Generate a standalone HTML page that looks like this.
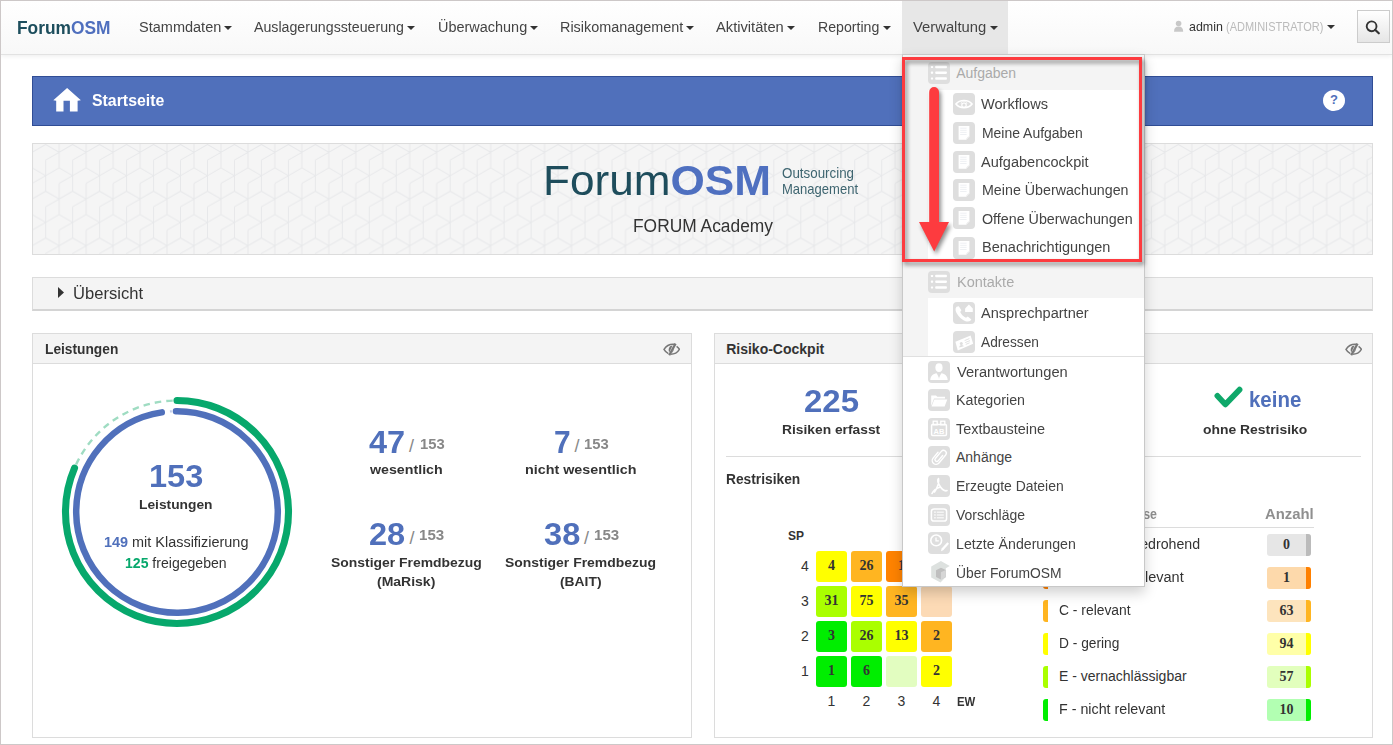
<!DOCTYPE html>
<html><head><meta charset="utf-8"><title>ForumOSM</title>
<style>
html,body{margin:0;padding:0;}
body{width:1393px;height:745px;position:relative;overflow:hidden;background:#fff;font-family:"Liberation Sans",sans-serif;color:#333;}
.t{position:absolute;white-space:nowrap;transform-origin:0 0;z-index:3}
.abs{position:absolute;z-index:3}
.caret{position:absolute;z-index:3;width:0;height:0;border-left:4px solid transparent;border-right:4px solid transparent;border-top:4px solid #555;}
#frame{position:absolute;left:0;top:0;width:1391px;height:743px;border:1px solid #cdc8c8;z-index:50;pointer-events:none;}
#navbar{position:absolute;left:1px;top:1px;width:1391px;height:53px;background:linear-gradient(#fff,#f8f8f8);border-bottom:1px solid #e2e2e2;box-shadow:0 1px 5px rgba(0,0,0,.08);z-index:1}
.panel{position:absolute;border:1px solid #dcdcdc;background:#fff;}
.phead{position:absolute;left:0;top:0;right:0;height:29px;background:#f4f4f4;border-bottom:1px solid #dcdcdc;}
.cell{position:absolute;width:31px;height:31px;border-radius:3px;}
.badge{position:absolute;left:1267px;width:44px;height:22px;border-radius:3px;overflow:hidden;}
.badge i{position:absolute;right:0;top:0;bottom:0;width:5px;}
.stripe{position:absolute;left:1043px;width:5px;height:22px;border-radius:3px 0 0 3px;}
.ico{position:absolute;width:22px;height:22px;border-radius:4px;background:#dedede;}
.ico svg{position:absolute;left:0;top:0;}
</style></head><body>
<div id="navbar"></div>
<div class="abs" style="left:902px;top:1px;width:106px;height:53px;background:#e7e7e7;z-index:2"></div>
<!-- user icon -->
<svg class="abs" style="left:1173px;top:20px" width="12" height="13" viewBox="0 0 12 13"><circle cx="5.6" cy="3.5" r="2.8" fill="#c8c8c8"/><path d="M1 11.8 C1 8.2 2.8 6.6 5.6 6.6 C8.4 6.6 10.2 8.2 10.2 11.8 Z" fill="#c8c8c8"/></svg>
<!-- search button -->
<div class="abs" style="left:1357px;top:10px;width:31px;height:31px;border:1px solid #ccc;border-radius:0;background:linear-gradient(#fff,#e6e6e6);"></div>
<svg class="abs" style="left:1365px;top:20px" width="16" height="15" viewBox="0 0 16 15"><circle cx="6.6" cy="6.3" r="4.9" fill="none" stroke="#333" stroke-width="1.9"/><path d="M10.1 9.8 L13.8 13.3" stroke="#333" stroke-width="2.2" stroke-linecap="round"/></svg>

<!-- blue bar -->
<div class="abs" style="left:32px;top:76px;width:1339px;height:48px;background:#5070bb;border:1px solid #304d95;"></div>
<svg class="abs" style="left:52px;top:87px" width="30" height="26" viewBox="0 0 30 26"><path d="M15.1 0.9 L28.9 13.2 L25.6 13.7 L25.6 24.5 L17.9 24.5 L17.9 13.7 L11.5 13.7 L11.5 24.5 L4.2 24.5 L4.2 13.7 L1.3 13.2 Z" fill="#fff"/></svg>
<div class="abs" style="left:1323px;top:89.5px;width:22px;height:21px;border-radius:50%;background:#fff;"></div>
<div class="t" style="left:1328px;top:92px;width:12px;text-align:center;font-size:13px;line-height:16px;font-weight:bold;color:#5070bb;">?</div>

<!-- banner -->
<div class="abs" style="left:32px;top:143px;width:1339px;height:110px;border:1px solid #dcdcdc;background:#f5f5f5;overflow:hidden;">
<svg width="1339" height="110" style="position:absolute;left:0;top:0">
<defs><pattern id="cubes" patternUnits="userSpaceOnUse" width="26.968" height="46.740" x="26.170" y="23.850"><path d="M-40.45 -70.11L-26.97 -62.32M-26.97 -62.32L-13.48 -70.11M-26.97 -77.90L-26.97 -46.74M-40.45 -54.53L-26.97 -62.32M-40.45 -54.53L-40.45 -23.37M-26.97 -46.74L-40.45 -38.95M-26.97 -46.74L-13.48 -38.95M-40.45 -38.95L-53.94 -31.16M-40.45 -23.37L-26.97 -15.58M-26.97 -15.58L-13.48 -23.37M-26.97 -31.16L-26.97 0.00M-40.45 -7.79L-26.97 -15.58M-40.45 -7.79L-40.45 23.37M-26.97 0.00L-40.45 7.79M-26.97 0.00L-13.48 7.79M-40.45 7.79L-53.94 15.58M-40.45 23.37L-26.97 31.16M-26.97 31.16L-13.48 23.37M-26.97 15.58L-26.97 46.74M-40.45 38.95L-26.97 31.16M-40.45 38.95L-40.45 70.11M-26.97 46.74L-40.45 54.53M-26.97 46.74L-13.48 54.53M-40.45 54.53L-53.94 62.32M-13.48 -70.11L0.00 -62.32M0.00 -62.32L13.48 -70.11M0.00 -77.90L0.00 -46.74M-13.48 -54.53L0.00 -62.32M-13.48 -54.53L-13.48 -23.37M0.00 -46.74L-13.48 -38.95M0.00 -46.74L13.48 -38.95M-13.48 -38.95L-26.97 -31.16M-13.48 -23.37L0.00 -15.58M0.00 -15.58L13.48 -23.37M0.00 -31.16L0.00 0.00M-13.48 -7.79L0.00 -15.58M-13.48 -7.79L-13.48 23.37M0.00 0.00L-13.48 7.79M0.00 0.00L13.48 7.79M-13.48 7.79L-26.97 15.58M-13.48 23.37L0.00 31.16M0.00 31.16L13.48 23.37M0.00 15.58L0.00 46.74M-13.48 38.95L0.00 31.16M-13.48 38.95L-13.48 70.11M0.00 46.74L-13.48 54.53M0.00 46.74L13.48 54.53M-13.48 54.53L-26.97 62.32M13.48 -70.11L26.97 -62.32M26.97 -62.32L40.45 -70.11M26.97 -77.90L26.97 -46.74M13.48 -54.53L26.97 -62.32M13.48 -54.53L13.48 -23.37M26.97 -46.74L13.48 -38.95M26.97 -46.74L40.45 -38.95M13.48 -38.95L0.00 -31.16M13.48 -23.37L26.97 -15.58M26.97 -15.58L40.45 -23.37M26.97 -31.16L26.97 0.00M13.48 -7.79L26.97 -15.58M13.48 -7.79L13.48 23.37M26.97 0.00L13.48 7.79M26.97 0.00L40.45 7.79M13.48 7.79L0.00 15.58M13.48 23.37L26.97 31.16M26.97 31.16L40.45 23.37M26.97 15.58L26.97 46.74M13.48 38.95L26.97 31.16M13.48 38.95L13.48 70.11M26.97 46.74L13.48 54.53M26.97 46.74L40.45 54.53M13.48 54.53L0.00 62.32M40.45 -70.11L53.94 -62.32M53.94 -62.32L67.42 -70.11M53.94 -77.90L53.94 -46.74M40.45 -54.53L53.94 -62.32M40.45 -54.53L40.45 -23.37M53.94 -46.74L40.45 -38.95M53.94 -46.74L67.42 -38.95M40.45 -38.95L26.97 -31.16M40.45 -23.37L53.94 -15.58M53.94 -15.58L67.42 -23.37M53.94 -31.16L53.94 0.00M40.45 -7.79L53.94 -15.58M40.45 -7.79L40.45 23.37M53.94 0.00L40.45 7.79M53.94 0.00L67.42 7.79M40.45 7.79L26.97 15.58M40.45 23.37L53.94 31.16M53.94 31.16L67.42 23.37M53.94 15.58L53.94 46.74M40.45 38.95L53.94 31.16M40.45 38.95L40.45 70.11M53.94 46.74L40.45 54.53M53.94 46.74L67.42 54.53M40.45 54.53L26.97 62.32" fill="none" stroke="#e7e8ea" stroke-width="1"/></pattern></defs>
<rect width="1339" height="110" fill="url(#cubes)"/>
</svg>
</div>

<!-- uebersicht -->
<div class="abs" style="left:32px;top:277px;width:1339px;height:31px;border:1px solid #dcdcdc;border-bottom:2px solid #d4d4d4;background:#f4f4f4;"></div>
<svg class="abs" style="left:57px;top:286px" width="8" height="13" viewBox="0 0 8 13"><path d="M1 1 L7 6.5 L1 12 Z" fill="#333"/></svg>

<!-- panels -->
<div class="panel" style="left:32px;top:333px;width:658px;height:403px;"><div class="phead"></div></div>
<div class="panel" style="left:714px;top:333px;width:657px;height:403px;"><div class="phead"></div></div>
<svg class="abs" style="left:663px;top:343px" width="17" height="13" viewBox="0 0 17 13"><path d="M11.8 1.3 C7.5 0.8 3.2 2.8 1 6.3 C2 8.2 3.6 9.7 5.4 10.6" fill="none" stroke="#777" stroke-width="1.5"/><path d="M13.6 3.3 C14.8 4.1 15.8 5.2 16.4 6.3 C14.6 9.4 11.2 11.2 7.6 11.2" fill="none" stroke="#777" stroke-width="1.5"/><path d="M12.6 0.6 L6.2 12.2" stroke="#777" stroke-width="2.2"/><path d="M7 3.2 L9.6 2.4 L6.3 9.5 C5.2 7.5 5.5 4.8 7 3.2 Z" fill="#777"/><path d="M10.6 6.2 L9.2 9.4" stroke="#888" stroke-width="1"/></svg>
<svg class="abs" style="left:1345px;top:343px" width="17" height="13" viewBox="0 0 17 13"><path d="M11.8 1.3 C7.5 0.8 3.2 2.8 1 6.3 C2 8.2 3.6 9.7 5.4 10.6" fill="none" stroke="#777" stroke-width="1.5"/><path d="M13.6 3.3 C14.8 4.1 15.8 5.2 16.4 6.3 C14.6 9.4 11.2 11.2 7.6 11.2" fill="none" stroke="#777" stroke-width="1.5"/><path d="M12.6 0.6 L6.2 12.2" stroke="#777" stroke-width="2.2"/><path d="M7 3.2 L9.6 2.4 L6.3 9.5 C5.2 7.5 5.5 4.8 7 3.2 Z" fill="#777"/><path d="M10.6 6.2 L9.2 9.4" stroke="#888" stroke-width="1"/></svg>
<!-- donut -->
<svg class="abs" style="left:57px;top:392.4px" width="240" height="240" viewBox="0 0 240 240">
<g transform="translate(120,120)">
<circle r="111.5" fill="none" stroke="#9fdcc2" stroke-width="2.4" stroke-dasharray="6.5 5" stroke-dashoffset="3.5"/>
<circle r="100.8" fill="none" stroke="#c2cdea" stroke-width="2.2" stroke-dasharray="2 9" stroke-dashoffset="-16"/>
<circle r="111.5" fill="none" stroke="#07a86c" stroke-width="7.1" stroke-linecap="round" transform="rotate(-90)" stroke-dasharray="570 1000"/>
<circle r="100.8" fill="none" stroke="#5070bb" stroke-width="6.5" stroke-linecap="round" transform="rotate(-90.6)" stroke-dasharray="618 1000"/>
</g></svg>

<!-- heatmap cells -->
<div class="cell" style="left:816px;top:551px;background:#ffff00"></div>
<div class="cell" style="left:851px;top:551px;background:#ffb521"></div>
<div class="cell" style="left:886px;top:551px;background:#ff8300"></div>
<div class="cell" style="left:921px;top:551px;background:#ff3030"></div>
<div class="cell" style="left:816px;top:586px;background:#aaff00"></div>
<div class="cell" style="left:851px;top:586px;background:#ffff00"></div>
<div class="cell" style="left:886px;top:586px;background:#ffb521"></div>
<div class="cell" style="left:921px;top:586px;background:#fcdab5"></div>
<div class="cell" style="left:816px;top:621px;background:#00ee00"></div>
<div class="cell" style="left:851px;top:621px;background:#aaff00"></div>
<div class="cell" style="left:886px;top:621px;background:#ffff00"></div>
<div class="cell" style="left:921px;top:621px;background:#ffb521"></div>
<div class="cell" style="left:816px;top:656px;background:#00ee00"></div>
<div class="cell" style="left:851px;top:656px;background:#00ee00"></div>
<div class="cell" style="left:886px;top:656px;background:#e2fdc0"></div>
<div class="cell" style="left:921px;top:656px;background:#ffff00"></div>

<!-- hr lines -->
<div class="abs" style="left:726px;top:456px;width:635px;height:1px;background:#dcdcdc"></div>
<!-- check -->
<svg class="abs" style="left:1214px;top:386px" width="29" height="23" viewBox="0 0 29 23"><path d="M3.4 9.9 L11.3 18.4 L25.5 3.7" fill="none" stroke="#0fa86a" stroke-width="5.8" stroke-linecap="round" stroke-linejoin="round"/></svg>

<!-- table -->
<div class="abs" style="left:1043px;top:527px;width:271px;height:1px;background:#dcdcdc"></div>
<div class="stripe" style="top:534px;background:#bbbbbb"></div><div class="badge" style="top:534px;background:#e6e6e6"><i style="background:#bbbbbb"></i></div>
<div class="stripe" style="top:567px;background:#ff8000"></div><div class="badge" style="top:567px;background:#fdd9ab"><i style="background:#ff8000"></i></div>
<div class="stripe" style="top:600px;background:#ffb521"></div><div class="badge" style="top:600px;background:#fde4bd"><i style="background:#ffb521"></i></div>
<div class="stripe" style="top:633px;background:#ffff00"></div><div class="badge" style="top:633px;background:#ffffa8"><i style="background:#ffff00"></i></div>
<div class="stripe" style="top:666px;background:#aaff00"></div><div class="badge" style="top:666px;background:#e2ffbd"><i style="background:#aaff00"></i></div>
<div class="stripe" style="top:699px;background:#00ee00"></div><div class="badge" style="top:699px;background:#b2ffb2"><i style="background:#00ee00"></i></div>

<div class="t" id="t0" style="left:16.5px;top:19px;font-size:18px;line-height:18px;font-weight:bold;color:#1d4e5d;transform:scaleX(0.9638);">Forum<span style="color:#4f6fbe">OSM</span></div>
<div class="t" id="t1" style="left:138.7px;top:20px;font-size:14px;line-height:14px;font-weight:normal;color:#444;transform:scaleX(1.0369);">Stammdaten</div>
<div class="t" id="t2" style="left:253.7px;top:20px;font-size:14px;line-height:14px;font-weight:normal;color:#444;transform:scaleX(1.0129);">Auslagerungssteuerung</div>
<div class="t" id="t3" style="left:437.8px;top:20px;font-size:14px;line-height:14px;font-weight:normal;color:#444;transform:scaleX(1.0325);">Überwachung</div>
<div class="t" id="t4" style="left:559.9px;top:20px;font-size:14px;line-height:14px;font-weight:normal;color:#444;transform:scaleX(1.0288);">Risikomanagement</div>
<div class="t" id="t5" style="left:716.1px;top:20px;font-size:14px;line-height:14px;font-weight:normal;color:#444;transform:scaleX(1.0496);">Aktivitäten</div>
<div class="t" id="t6" style="left:818.2px;top:20px;font-size:14px;line-height:14px;font-weight:normal;color:#444;transform:scaleX(1.0098);">Reporting</div>
<div class="t" id="t7" style="left:913.3px;top:20px;font-size:14px;line-height:14px;font-weight:normal;color:#444;transform:scaleX(1.0566);">Verwaltung</div>
<div class="t" id="t8" style="left:1188.7px;top:20px;font-size:13px;line-height:13px;font-weight:normal;color:#333;transform:scaleX(0.9570);">admin</div>
<div class="t" id="t9" style="left:1226.4px;top:20px;font-size:13px;line-height:13px;font-weight:normal;color:#bbb;transform:scaleX(0.8464);">(ADMINISTRATOR)</div>
<div class="t" id="t10" style="left:91.9px;top:92px;font-size:17px;line-height:17px;font-weight:bold;color:#fff;transform:scaleX(0.9331);">Startseite</div>
<div class="t" id="t11" style="left:543.0px;top:160px;font-size:42px;line-height:42px;font-weight:normal;color:#1e4d5c;transform:scaleX(1.0505);"><span style="font-weight:normal">Forum</span><span style="color:#4f70c0;font-weight:bold">OSM</span></div>
<div class="t" id="t12" style="left:782.0px;top:165px;font-size:15px;line-height:15px;font-weight:normal;color:#3e6570;transform:scaleX(0.8903);">Outsourcing</div>
<div class="t" id="t13" style="left:782.0px;top:181px;font-size:15px;line-height:15px;font-weight:normal;color:#3e6570;transform:scaleX(0.8680);">Management</div>
<div class="t" id="t14" style="left:632.7px;top:217px;font-size:18px;line-height:18px;font-weight:normal;color:#333;transform:scaleX(0.9653);">FORUM Academy</div>
<div class="t" id="t15" style="left:73.2px;top:285px;font-size:17px;line-height:17px;font-weight:normal;color:#333;transform:scaleX(0.9748);">Übersicht</div>
<div class="t" id="t16" style="left:45.0px;top:342px;font-size:14px;line-height:14px;font-weight:bold;color:#333;transform:scaleX(0.9816);">Leistungen</div>
<div class="t" id="t17" style="left:726.2px;top:342px;font-size:14px;line-height:14px;font-weight:bold;color:#333;">Risiko-Cockpit</div>
<div class="t" id="t18" style="left:149.0px;top:460px;font-size:32px;line-height:32px;font-weight:bold;color:#5070bb;transform:scaleX(1.0170);">153</div>
<div class="t" id="t19" style="left:139.0px;top:498px;font-size:13px;line-height:13px;font-weight:bold;color:#333;transform:scaleX(1.0599);">Leistungen</div>
<div class="t" id="t20" style="left:104.2px;top:535px;font-size:14px;line-height:14px;font-weight:normal;color:#333;transform:scaleX(1.0310);"><span style="color:#5070bb;font-weight:bold">149</span> mit Klassifizierung</div>
<div class="t" id="t21" style="left:125.2px;top:556px;font-size:14px;line-height:14px;font-weight:normal;color:#333;transform:scaleX(1.0039);"><span style="color:#07a86c;font-weight:bold">125</span> freigegeben</div>
<div class="t" id="t22" style="left:368.9px;top:426px;font-size:32px;line-height:32px;font-weight:bold;color:#5070bb;transform:scaleX(1.0142);">47</div>
<div class="t" id="t23" style="left:409.0px;top:437px;font-size:18px;line-height:18px;font-weight:normal;color:#888;">/</div>
<div class="t" id="t24" style="left:419.5px;top:436px;font-size:15px;line-height:15px;font-weight:bold;color:#888;transform:scaleX(0.9868);">153</div>
<div class="t" id="t25" style="left:369.7px;top:463px;font-size:13px;line-height:13px;font-weight:bold;color:#333;transform:scaleX(1.0937);">wesentlich</div>
<div class="t" id="t26" style="left:553.7px;top:426px;font-size:32px;line-height:32px;font-weight:bold;color:#5070bb;transform:scaleX(0.9327);">7</div>
<div class="t" id="t27" style="left:574.6px;top:437px;font-size:18px;line-height:18px;font-weight:normal;color:#888;">/</div>
<div class="t" id="t28" style="left:584.4px;top:436px;font-size:15px;line-height:15px;font-weight:bold;color:#888;transform:scaleX(0.9868);">153</div>
<div class="t" id="t29" style="left:525.3px;top:463px;font-size:13px;line-height:13px;font-weight:bold;color:#333;transform:scaleX(1.1024);">nicht wesentlich</div>
<div class="t" id="t30" style="left:369.3px;top:518px;font-size:32px;line-height:32px;font-weight:bold;color:#5070bb;transform:scaleX(1.0170);">28</div>
<div class="t" id="t31" style="left:409.5px;top:529px;font-size:18px;line-height:18px;font-weight:normal;color:#888;">/</div>
<div class="t" id="t32" style="left:419.1px;top:527px;font-size:15px;line-height:15px;font-weight:bold;color:#888;transform:scaleX(1.0067);">153</div>
<div class="t" id="t33" style="left:331.2px;top:556px;font-size:13px;line-height:13px;font-weight:bold;color:#333;transform:scaleX(1.0699);">Sonstiger Fremdbezug</div>
<div class="t" id="t34" style="left:377.1px;top:575px;font-size:13px;line-height:13px;font-weight:bold;color:#333;transform:scaleX(1.0759);">(MaRisk)</div>
<div class="t" id="t35" style="left:543.7px;top:518px;font-size:32px;line-height:32px;font-weight:bold;color:#5070bb;transform:scaleX(1.0198);">38</div>
<div class="t" id="t36" style="left:583.9px;top:529px;font-size:18px;line-height:18px;font-weight:normal;color:#888;">/</div>
<div class="t" id="t37" style="left:593.5px;top:527px;font-size:15px;line-height:15px;font-weight:bold;color:#888;transform:scaleX(1.0067);">153</div>
<div class="t" id="t38" style="left:505.2px;top:556px;font-size:13px;line-height:13px;font-weight:bold;color:#333;transform:scaleX(1.0720);">Sonstiger Fremdbezug</div>
<div class="t" id="t39" style="left:560.3px;top:575px;font-size:13px;line-height:13px;font-weight:bold;color:#333;transform:scaleX(1.0641);">(BAIT)</div>
<div class="t" id="t40" style="left:804.0px;top:385px;font-size:32px;line-height:32px;font-weight:bold;color:#5070bb;transform:scaleX(1.0301);">225</div>
<div class="t" id="t41" style="left:782.2px;top:423px;font-size:13px;line-height:13px;font-weight:bold;color:#333;transform:scaleX(1.0616);">Risiken erfasst</div>
<div class="t" id="t42" style="left:726.3px;top:472px;font-size:14px;line-height:14px;font-weight:bold;color:#333;transform:scaleX(0.9830);">Restrisiken</div>
<div class="t" id="t43" style="left:1248.5px;top:389px;font-size:22px;line-height:22px;font-weight:bold;color:#5070bb;transform:scaleX(0.9295);">keine</div>
<div class="t" id="t44" style="left:1202.8px;top:423px;font-size:13px;line-height:13px;font-weight:bold;color:#333;transform:scaleX(1.0694);">ohne Restrisiko</div>
<div class="t" id="t45" style="left:788.0px;top:530px;font-size:12px;line-height:12px;font-weight:bold;color:#333;">SP</div>
<div class="t" id="t46" style="left:801.0px;top:559px;font-size:14px;line-height:14px;font-weight:normal;color:#333;">4</div>
<div class="t" id="t47" style="left:801.0px;top:594px;font-size:14px;line-height:14px;font-weight:normal;color:#333;">3</div>
<div class="t" id="t48" style="left:801.0px;top:629px;font-size:14px;line-height:14px;font-weight:normal;color:#333;">2</div>
<div class="t" id="t49" style="left:801.0px;top:664px;font-size:14px;line-height:14px;font-weight:normal;color:#333;">1</div>
<div class="t" id="t50" style="left:831.5px;top:694px;font-size:14px;line-height:14px;font-weight:normal;color:#333;transform:translateX(-50%);">1</div>
<div class="t" id="t51" style="left:866.5px;top:694px;font-size:14px;line-height:14px;font-weight:normal;color:#333;transform:translateX(-50%);">2</div>
<div class="t" id="t52" style="left:901.5px;top:694px;font-size:14px;line-height:14px;font-weight:normal;color:#333;transform:translateX(-50%);">3</div>
<div class="t" id="t53" style="left:936.5px;top:694px;font-size:14px;line-height:14px;font-weight:normal;color:#333;transform:translateX(-50%);">4</div>
<div class="t" id="t54" style="left:957.0px;top:696px;font-size:12px;line-height:12px;font-weight:bold;color:#333;transform:scaleX(0.9460);">EW</div>
<div class="t" id="t55" style="left:831.5px;top:559px;font-size:14px;line-height:14px;font-weight:bold;color:#333;font-family:'Liberation Serif', serif;transform:translateX(-50%);">4</div>
<div class="t" id="t56" style="left:866.5px;top:559px;font-size:14px;line-height:14px;font-weight:bold;color:#333;font-family:'Liberation Serif', serif;transform:translateX(-50%);">26</div>
<div class="t" id="t57" style="left:901.5px;top:559px;font-size:14px;line-height:14px;font-weight:bold;color:#333;font-family:'Liberation Serif', serif;transform:translateX(-50%);">1</div>
<div class="t" id="t58" style="left:831.5px;top:594px;font-size:14px;line-height:14px;font-weight:bold;color:#333;font-family:'Liberation Serif', serif;transform:translateX(-50%);">31</div>
<div class="t" id="t59" style="left:866.5px;top:594px;font-size:14px;line-height:14px;font-weight:bold;color:#333;font-family:'Liberation Serif', serif;transform:translateX(-50%);">75</div>
<div class="t" id="t60" style="left:901.5px;top:594px;font-size:14px;line-height:14px;font-weight:bold;color:#333;font-family:'Liberation Serif', serif;transform:translateX(-50%);">35</div>
<div class="t" id="t61" style="left:831.5px;top:629px;font-size:14px;line-height:14px;font-weight:bold;color:#333;font-family:'Liberation Serif', serif;transform:translateX(-50%);">3</div>
<div class="t" id="t62" style="left:866.5px;top:629px;font-size:14px;line-height:14px;font-weight:bold;color:#333;font-family:'Liberation Serif', serif;transform:translateX(-50%);">26</div>
<div class="t" id="t63" style="left:901.5px;top:629px;font-size:14px;line-height:14px;font-weight:bold;color:#333;font-family:'Liberation Serif', serif;transform:translateX(-50%);">13</div>
<div class="t" id="t64" style="left:936.5px;top:629px;font-size:14px;line-height:14px;font-weight:bold;color:#333;font-family:'Liberation Serif', serif;transform:translateX(-50%);">2</div>
<div class="t" id="t65" style="left:831.5px;top:664px;font-size:14px;line-height:14px;font-weight:bold;color:#333;font-family:'Liberation Serif', serif;transform:translateX(-50%);">1</div>
<div class="t" id="t66" style="left:866.5px;top:664px;font-size:14px;line-height:14px;font-weight:bold;color:#333;font-family:'Liberation Serif', serif;transform:translateX(-50%);">6</div>
<div class="t" id="t67" style="left:936.5px;top:664px;font-size:14px;line-height:14px;font-weight:bold;color:#333;font-family:'Liberation Serif', serif;transform:translateX(-50%);">2</div>
<div class="t" id="t68" style="left:1059.0px;top:507px;font-size:14px;line-height:14px;font-weight:bold;color:#8f8f8f;transform:scaleX(0.8866);">Restrisikoklasse</div>
<div class="t" id="t69" style="left:1265.2px;top:507px;font-size:14px;line-height:14px;font-weight:bold;color:#8f8f8f;transform:scaleX(1.0612);">Anzahl</div>
<div class="t" id="t70" style="left:1059.0px;top:537px;font-size:14px;line-height:14px;font-weight:normal;color:#333;transform:scaleX(1.0127);">A - existenzbedrohend</div>
<div class="t" id="t71" style="left:1286.5px;top:538px;font-size:14px;line-height:14px;font-weight:bold;color:#333;font-family:'Liberation Serif', serif;transform:translateX(-50%);">0</div>
<div class="t" id="t72" style="left:1144.7px;top:570px;font-size:14px;line-height:14px;font-weight:normal;color:#333;transform:scaleX(1.0359);">levant</div>
<div class="t" id="t73" style="left:1286.5px;top:571px;font-size:14px;line-height:14px;font-weight:bold;color:#333;font-family:'Liberation Serif', serif;transform:translateX(-50%);">1</div>
<div class="t" id="t74" style="left:1059.0px;top:603px;font-size:14px;line-height:14px;font-weight:normal;color:#333;transform:scaleX(0.9895);">C - relevant</div>
<div class="t" id="t75" style="left:1286.5px;top:604px;font-size:14px;line-height:14px;font-weight:bold;color:#333;font-family:'Liberation Serif', serif;transform:translateX(-50%);">63</div>
<div class="t" id="t76" style="left:1059.0px;top:636px;font-size:14px;line-height:14px;font-weight:normal;color:#333;transform:scaleX(0.9823);">D - gering</div>
<div class="t" id="t77" style="left:1286.5px;top:637px;font-size:14px;line-height:14px;font-weight:bold;color:#333;font-family:'Liberation Serif', serif;transform:translateX(-50%);">94</div>
<div class="t" id="t78" style="left:1059.0px;top:669px;font-size:14px;line-height:14px;font-weight:normal;color:#333;">E - vernachlässigbar</div>
<div class="t" id="t79" style="left:1286.5px;top:670px;font-size:14px;line-height:14px;font-weight:bold;color:#333;font-family:'Liberation Serif', serif;transform:translateX(-50%);">57</div>
<div class="t" id="t80" style="left:1059.0px;top:702px;font-size:14px;line-height:14px;font-weight:normal;color:#333;transform:scaleX(1.0191);">F - nicht relevant</div>
<div class="t" id="t81" style="left:1286.5px;top:703px;font-size:14px;line-height:14px;font-weight:bold;color:#333;font-family:'Liberation Serif', serif;transform:translateX(-50%);">10</div>
<div class="caret" style="left:224.1px;top:26px;border-top-color:#333"></div>
<div class="caret" style="left:406.6px;top:26px;border-top-color:#333"></div>
<div class="caret" style="left:530.1px;top:26px;border-top-color:#333"></div>
<div class="caret" style="left:686.3px;top:26px;border-top-color:#333"></div>
<div class="caret" style="left:787.0px;top:26px;border-top-color:#333"></div>
<div class="caret" style="left:882.6px;top:26px;border-top-color:#333"></div>
<div class="caret" style="left:989.6px;top:26px;border-top-color:#333"></div>
<div class="caret" style="left:1327.0px;top:25px;border-top-color:#333"></div>

<!-- dropdown -->
<div class="abs" style="left:902px;top:54px;width:241px;height:531px;background:#fff;border:1px solid #c8c8c8;box-shadow:0 6px 12px rgba(0,0,0,.18);z-index:10;overflow:hidden;">
  <div class="abs" style="left:0;top:0;width:241px;height:35px;background:#f4f4f4"></div>
  <div class="abs" style="left:0;top:35px;width:25px;height:172px;background:#f4f4f4"></div>
  <div class="abs" style="left:0;top:207px;width:241px;height:36px;background:#f4f4f4"></div>
  <div class="abs" style="left:0;top:243px;width:25px;height:58px;background:#f4f4f4"></div>
  <div class="abs" style="left:0;top:301px;width:241px;height:1px;background:#e0e0e0"></div>
</div>
<div class="abs" style="left:0;top:0;width:1393px;height:745px;z-index:11;">
  <!-- header icons (list) -->
  <div class="ico" style="left:928px;top:62px"><svg width="22" height="22" viewBox="0 0 22 22"><g fill="#fff"><rect x="2.9" y="3.9" width="2.2" height="2.2" rx=".6"/><rect x="2.9" y="9.6" width="2.2" height="2.2" rx=".6"/><rect x="2.9" y="15.4" width="2.2" height="2.2" rx=".6"/><rect x="7.2" y="3.8" width="11.7" height="2.4" rx=".8"/><rect x="7.2" y="9.5" width="11.7" height="2.4" rx=".8"/><rect x="7.2" y="15.3" width="11.7" height="2.4" rx=".8"/></g></svg></div>
  <div class="ico" style="left:928px;top:271px"><svg width="22" height="22" viewBox="0 0 22 22"><g fill="#fff"><rect x="2.9" y="3.9" width="2.2" height="2.2" rx=".6"/><rect x="2.9" y="9.6" width="2.2" height="2.2" rx=".6"/><rect x="2.9" y="15.4" width="2.2" height="2.2" rx=".6"/><rect x="7.2" y="3.8" width="11.7" height="2.4" rx=".8"/><rect x="7.2" y="9.5" width="11.7" height="2.4" rx=".8"/><rect x="7.2" y="15.3" width="11.7" height="2.4" rx=".8"/></g></svg></div>
  <!-- workflows eye -->
  <div class="ico" style="left:953px;top:93px"><svg width="22" height="22" viewBox="0 0 22 22"><path d="M3 11 C6.5 6.3 15.5 6.3 19 11 C15.5 15.7 6.5 15.7 3 11 Z" fill="none" stroke="#fff" stroke-width="1.7"/><path d="M7.6 10.6 A3.5 3.5 0 0 1 14.4 10.6 L13.6 11.2 A2.6 2.6 0 0 0 8.4 11.2 Z" fill="#fff"/><circle cx="11" cy="12.2" r="2.2" fill="none" stroke="#fff" stroke-width="1.2"/></svg></div>
  <!-- doc icons -->
  <div class="ico" style="left:953px;top:122px"><svg width="22" height="22" viewBox="0 0 22 22"><path d="M5.6 3.9 H16.4 V14.6 L13.4 17.8 H5.6 Z" fill="#fff"/><g stroke="#eceef2" stroke-width=".9"><path d="M7.2 6.2 H13.6 M7.2 8.3 H13.6 M7.2 10.4 H13.6 M7.2 12.5 H13.6"/></g><path d="M13.6 17.6 C13.8 16 14.6 15 16.2 14.8" fill="none" stroke="#e6e6e6" stroke-width=".8"/></svg></div>
  <div class="ico" style="left:953px;top:151px"><svg width="22" height="22" viewBox="0 0 22 22"><path d="M5.6 3.9 H16.4 V14.6 L13.4 17.8 H5.6 Z" fill="#fff"/><g stroke="#eceef2" stroke-width=".9"><path d="M7.2 6.2 H13.6 M7.2 8.3 H13.6 M7.2 10.4 H13.6 M7.2 12.5 H13.6"/></g><path d="M13.6 17.6 C13.8 16 14.6 15 16.2 14.8" fill="none" stroke="#e6e6e6" stroke-width=".8"/></svg></div>
  <div class="ico" style="left:953px;top:179px"><svg width="22" height="22" viewBox="0 0 22 22"><path d="M5.6 3.9 H16.4 V14.6 L13.4 17.8 H5.6 Z" fill="#fff"/><g stroke="#eceef2" stroke-width=".9"><path d="M7.2 6.2 H13.6 M7.2 8.3 H13.6 M7.2 10.4 H13.6 M7.2 12.5 H13.6"/></g><path d="M13.6 17.6 C13.8 16 14.6 15 16.2 14.8" fill="none" stroke="#e6e6e6" stroke-width=".8"/></svg></div>
  <div class="ico" style="left:953px;top:207px"><svg width="22" height="22" viewBox="0 0 22 22"><path d="M5.6 3.9 H16.4 V14.6 L13.4 17.8 H5.6 Z" fill="#fff"/><g stroke="#eceef2" stroke-width=".9"><path d="M7.2 6.2 H13.6 M7.2 8.3 H13.6 M7.2 10.4 H13.6 M7.2 12.5 H13.6"/></g><path d="M13.6 17.6 C13.8 16 14.6 15 16.2 14.8" fill="none" stroke="#e6e6e6" stroke-width=".8"/></svg></div>
  <div class="ico" style="left:953px;top:237px"><svg width="22" height="22" viewBox="0 0 22 22"><path d="M5.6 3.9 H16.4 V14.6 L13.4 17.8 H5.6 Z" fill="#fff"/><g stroke="#eceef2" stroke-width=".9"><path d="M7.2 6.2 H13.6 M7.2 8.3 H13.6 M7.2 10.4 H13.6 M7.2 12.5 H13.6"/></g><path d="M13.6 17.6 C13.8 16 14.6 15 16.2 14.8" fill="none" stroke="#e6e6e6" stroke-width=".8"/></svg></div>
  <!-- phone -->
  <div class="ico" style="left:953px;top:302px"><svg width="22" height="22" viewBox="0 0 22 22"><path d="M3.6 4.8 C2.6 5.8 2.2 7.6 3 9.8 C4.6 13.6 8.2 17.6 12.6 19.2 C14.6 19.9 16.4 19.6 17.6 18.5 L18.4 17.4 L14.8 14.6 L13 15.8 C10.6 14.8 8.2 12.3 7.2 10 L8.4 8.2 L5.8 4.2 Z" fill="#fff"/><path d="M15.9 2.6 L19.8 6.4 V10 H12.1 V6.4 Z" fill="#fff"/></svg></div>
  <!-- address card -->
  <div class="ico" style="left:953px;top:331px"><svg width="22" height="22" viewBox="0 0 22 22"><path d="M2.4 10.8 L17.6 4.4 L20.2 12.8 L4.8 19.6 Z" fill="#fff"/><circle cx="8.3" cy="12.4" r="1.5" fill="#dedede"/><path d="M6.2 16.4 C6.4 14.6 7.4 14.2 8.8 14 C10 14.2 10.6 14.6 10.8 15.2 Z" fill="#dedede"/><path d="M11.6 9.6 L16.4 7.6 M12.2 11.6 L17 9.6 M12.8 13.4 L16.6 11.8" stroke="#dedede" stroke-width=".9"/></svg></div>
  <!-- person -->
  <div class="ico" style="left:928px;top:361px"><svg width="22" height="22" viewBox="0 0 22 22"><ellipse cx="11" cy="6.6" rx="3.6" ry="4.4" fill="#fff"/><path d="M2.3 19 C2.6 14.6 5 13 8.6 12.2 L11 16.6 L13.4 12.2 C17 13 19.4 14.6 19.7 19 Z" fill="#fff"/><path d="M10.2 13 L11 18 L11.8 13" fill="#dedede"/></svg></div>
  <!-- folder -->
  <div class="ico" style="left:928px;top:389px"><svg width="22" height="22" viewBox="0 0 22 22"><path d="M3.2 6.5 H8 L9.3 7.8 H17 V9.5 H6 L3.2 17 Z" fill="#fff"/><path d="M6.3 10.5 H19.3 L16.6 17.5 H3.5 Z" fill="#fff"/></svg></div>
  <!-- AB -->
  <div class="ico" style="left:928px;top:418px"><svg width="22" height="22" viewBox="0 0 22 22"><rect x="3.6" y="6.6" width="14.8" height="11" rx="1" fill="none" stroke="#fff" stroke-width="1.5"/><rect x="5.2" y="3.2" width="4" height="3.6" fill="none" stroke="#fff" stroke-width="1.3"/><rect x="12.8" y="3.2" width="4" height="3.6" fill="none" stroke="#fff" stroke-width="1.3"/><text x="11" y="15.6" font-size="7.5" font-family="Liberation Sans" font-weight="bold" fill="#fff" text-anchor="middle">AB</text></svg></div>
  <!-- paperclip -->
  <div class="ico" style="left:928px;top:446px"><svg width="22" height="22" viewBox="0 0 22 22"><path d="M12.8 7.5 V14.5 A1.8 1.8 0 0 1 9.2 14.5 V5.2 A2.8 2.8 0 0 1 14.8 5.2 V15.6 A3.8 3.8 0 0 1 7.2 15.6 V8" fill="none" stroke="#fff" stroke-width="1.4" stroke-linecap="round" transform="rotate(40 11 11)"/></svg></div>
  <!-- pdf -->
  <div class="ico" style="left:928px;top:475px"><svg width="22" height="22" viewBox="0 0 22 22"><path d="M10.5 3.5 C9 5 10.5 9 12.5 12 C14.5 15 17.5 16.5 19 15.5 M12.5 12 C9 13 5.5 15 4 18.5 M10.5 3.5 C11.5 7 9.5 13 6.5 17" fill="none" stroke="#fff" stroke-width="1.6" stroke-linecap="round"/></svg></div>
  <!-- list card -->
  <div class="ico" style="left:928px;top:504px"><svg width="22" height="22" viewBox="0 0 22 22"><rect x="3.4" y="5" width="15.2" height="12" rx="2.6" fill="none" stroke="#fff" stroke-width="1.5"/><g fill="#fff" opacity=".85"><rect x="6.2" y="7.4" width="1.5" height="1.5"/><rect x="6.2" y="10.2" width="1.5" height="1.5"/><rect x="6.2" y="13" width="1.5" height="1.5"/><rect x="8.8" y="7.6" width="7" height="1.2"/><rect x="8.8" y="10.4" width="7" height="1.2"/><rect x="8.8" y="13.2" width="7" height="1.2"/></g></svg></div>
  <!-- clock pen -->
  <div class="ico" style="left:928px;top:532px"><svg width="22" height="22" viewBox="0 0 22 22"><circle cx="8.2" cy="8.4" r="5.4" fill="none" stroke="#fff" stroke-width="1.6"/><path d="M8 5.6 V8.8 H10.8" stroke="#fff" stroke-width="1.3" fill="none"/><path d="M13 19.2 L13.6 16.6 L19.4 10.2 L21 11.8 L15.2 18.2 Z" fill="#fff"/></svg></div>
  <!-- cube logo -->
  <svg class="abs" style="left:926px;top:556px" width="28" height="30" viewBox="0 0 28 30"><path d="M5.2 10.5 L14.9 5 L23.8 10 L19.8 12.3 V21 L14.5 26.6 L5.2 21.4 Z" fill="#dde1df"/><path d="M10 14.2 L14.9 11.8 L19.8 14 V21 L14.9 23.5 L10 21 Z" fill="#bfbfbf"/><path d="M14.9 16.2 L19.8 14 V21 L14.9 23.5 Z" fill="#d6d6d6"/></svg>
  <div class="t" id="t82" style="left:956.2px;top:66px;font-size:14px;line-height:14px;font-weight:normal;color:#aaa;">Aufgaben</div>
<div class="t" id="t83" style="left:981.1px;top:97px;font-size:14px;line-height:14px;font-weight:normal;color:#444;transform:scaleX(1.0418);">Workflows</div>
<div class="t" id="t84" style="left:981.5px;top:126px;font-size:14px;line-height:14px;font-weight:normal;color:#444;transform:scaleX(0.9960);">Meine Aufgaben</div>
<div class="t" id="t85" style="left:981.0px;top:155px;font-size:14px;line-height:14px;font-weight:normal;color:#444;transform:scaleX(1.0383);">Aufgabencockpit</div>
<div class="t" id="t86" style="left:981.5px;top:183px;font-size:14px;line-height:14px;font-weight:normal;color:#444;transform:scaleX(1.0175);">Meine Überwachungen</div>
<div class="t" id="t87" style="left:981.5px;top:212px;font-size:14px;line-height:14px;font-weight:normal;color:#444;transform:scaleX(1.0202);">Offene Überwachungen</div>
<div class="t" id="t88" style="left:981.5px;top:240px;font-size:14px;line-height:14px;font-weight:normal;color:#444;transform:scaleX(1.0374);">Benachrichtigungen</div>
<div class="t" id="t89" style="left:956.5px;top:275px;font-size:14px;line-height:14px;font-weight:normal;color:#aaa;transform:scaleX(1.0350);">Kontakte</div>
<div class="t" id="t90" style="left:981.0px;top:306px;font-size:14px;line-height:14px;font-weight:normal;color:#444;transform:scaleX(1.0404);">Ansprechpartner</div>
<div class="t" id="t91" style="left:981.0px;top:335px;font-size:14px;line-height:14px;font-weight:normal;color:#444;transform:scaleX(0.9805);">Adressen</div>
<div class="t" id="t92" style="left:956.5px;top:365px;font-size:14px;line-height:14px;font-weight:normal;color:#444;transform:scaleX(1.0457);">Verantwortungen</div>
<div class="t" id="t93" style="left:956.0px;top:393px;font-size:14px;line-height:14px;font-weight:normal;color:#444;transform:scaleX(1.0189);">Kategorien</div>
<div class="t" id="t94" style="left:956.0px;top:422px;font-size:14px;line-height:14px;font-weight:normal;color:#444;transform:scaleX(1.0300);">Textbausteine</div>
<div class="t" id="t95" style="left:956.0px;top:450px;font-size:14px;line-height:14px;font-weight:normal;color:#444;">Anhänge</div>
<div class="t" id="t96" style="left:956.0px;top:479px;font-size:14px;line-height:14px;font-weight:normal;color:#444;transform:scaleX(0.9955);">Erzeugte Dateien</div>
<div class="t" id="t97" style="left:956.0px;top:508px;font-size:14px;line-height:14px;font-weight:normal;color:#444;transform:scaleX(0.9959);">Vorschläge</div>
<div class="t" id="t98" style="left:956.0px;top:537px;font-size:14px;line-height:14px;font-weight:normal;color:#444;transform:scaleX(1.0124);">Letzte Änderungen</div>
<div class="t" id="t99" style="left:956.0px;top:566px;font-size:14px;line-height:14px;font-weight:normal;color:#444;transform:scaleX(0.9899);">Über ForumOSM</div>
  <!-- red box -->
  <div class="abs" style="left:902px;top:57px;width:234px;height:199px;border:3px solid #fd3b3f;filter:drop-shadow(2px 3px 2px rgba(0,0,0,.45));"></div>
  <!-- arrow -->
  <svg class="abs" style="left:912.2px;top:80px;filter:drop-shadow(2px 3px 2px rgba(0,0,0,.45));" width="45" height="180" viewBox="0 0 45 180"><path d="M17.2 12 A4.9 4.9 0 0 1 27 12 L27 142 L37 142 L22.2 171.5 L7 142 L17.2 142 Z" fill="#fd3b3f"/></svg>
</div>
<div id="frame"></div>

</body></html>
